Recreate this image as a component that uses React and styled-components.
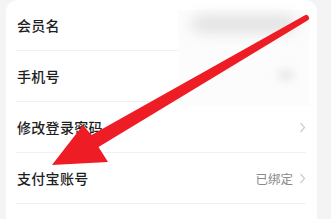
import React from 'react'
import styled, { createGlobalStyle } from 'styled-components'

const Global = createGlobalStyle`
  html, body { margin: 0; padding: 0; background: #f4f4f4; }
  body { font-family: "Noto Sans CJK SC", "Noto Sans", sans-serif; }
`

const Page = styled.div`
  position: relative;
  width: 331px;
  height: 219px;
  overflow: hidden;
  background: #f4f4f4;
`

const Card = styled.div`
  margin-left: 6px;
  width: 311px;
  height: 240px;
  background: #fff;
  border-radius: 12px 12px 0 0;
  padding: 0 11px 0 10px;
  box-sizing: border-box;
`

const Row = styled.div`
  height: 50px;
  display: flex;
  align-items: center;
  justify-content: space-between;
  border-bottom: 1px solid #f0f0f0;
  padding: 0 0 0 1px;
`

const Label = styled.span`
  font-size: 14px;
  font-weight: 500;
  color: #1e1e1e;
  letter-spacing: 0.3px;
`

const Right = styled.div`
  display: flex;
  align-items: center;
  gap: 6px;
`

const Value = styled.span`
  font-size: 12.5px;
  color: #8a8a8a;
`

// redacted area over the member name / phone values
const Blur = styled.div`
  position: absolute;
  left: 178px;
  top: 10px;
  width: 132px;
  height: 96px;
  background: #fcfcfc;
`

const Smudge = styled.div`
  position: absolute;
  left: ${p => p.x}px;
  top: ${p => p.y}px;
  width: ${p => p.w}px;
  height: ${p => p.h}px;
  border-radius: 10px;
  background: ${p => p.c};
  filter: blur(${p => p.b}px);
`

const Arrow = styled.svg`
  position: absolute;
  left: 0;
  top: 0;
  pointer-events: none;
`

const Chevron = () => (
  <svg width="7" height="11" viewBox="0 0 7 11">
    <polyline points="1.5,1 5.5,5.5 1.5,10" fill="none" stroke="#cbcbcb" strokeWidth="1.2" />
  </svg>
)

const rows = [
  { label: '会员名' },
  { label: '手机号' },
  { label: '修改登录密码', arrow: true },
  { label: '支付宝账号', value: '已绑定', arrow: true },
]

export default function App() {
  return (
    <Page>
      <Global />
      <Card>
        {rows.map(r => (
          <Row key={r.label}>
            <Label>{r.label}</Label>
            <Right>
              {r.value && <Value>{r.value}</Value>}
              {r.arrow && <Chevron />}
            </Right>
          </Row>
        ))}
      </Card>
      <Blur>
        <Smudge x={14} y={6} w={104} h={16} c="#e0e0e0" b={7} />
        <Smudge x={100} y={60} w={16} h={10} c="#e6e6e6" b={4} />
      </Blur>
      <Arrow width="331" height="219" viewBox="0 0 331 219">
        <path
          d="M52 165 L108 162 L98.5 147 L307.5 20.6 A3 3 0 0 0 304.5 15.4 L91.5 135 L83 125 Z"
          fill="#ee1c25"
        />
      </Arrow>
    </Page>
  )
}
